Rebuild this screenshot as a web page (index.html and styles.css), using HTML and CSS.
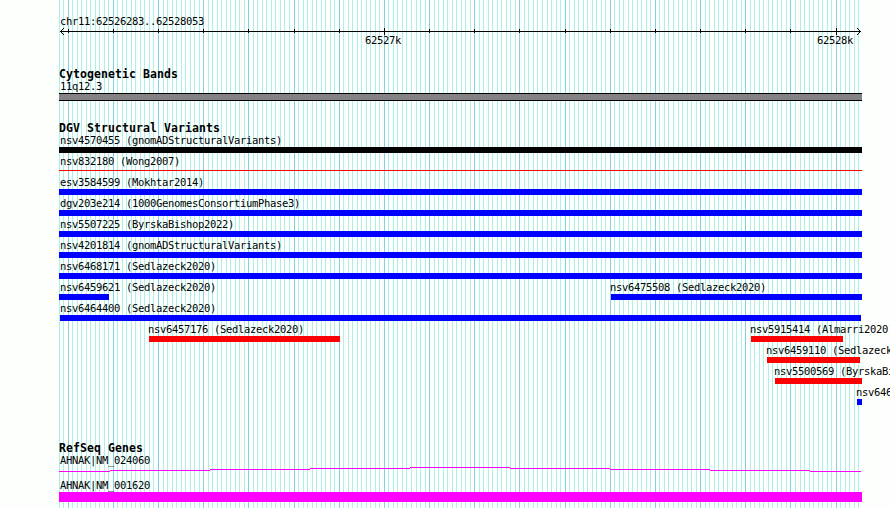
FILE: index.html
```
<!DOCTYPE html>
<html lang="en">
<head>
  <meta charset="UTF-8">
  <title>chr11:62526283..62528053</title>
  <link rel="stylesheet" href="styles.css">
</head>
<body>
  <div class="browser">
    <svg id="grid" class="grid" width="890" height="508" shape-rendering="crispEdges"></svg>

    <!-- Ruler -->
    <div class="ruler">
      <div class="label">chr11:62526283..62528053</div>
      <svg id="scale" class="scale" width="890" height="9" shape-rendering="crispEdges">
        <rect x="60" y="4" width="801" height="1"/>
        <path d="M61 3h1v3h-1zM62 2h1v1h-1zM62 6h1v1h-1zM63 1h1v1h-1zM63 7h1v1h-1z"/>
        <path d="M859 3h1v3h-1zM858 2h1v1h-1zM858 6h1v1h-1zM857 1h1v1h-1zM857 7h1v1h-1z"/>
      </svg>
      <div class="row ticks">
        <span class="label tick-a">62527k</span>
        <span class="label tick-b">62528k</span>
      </div>
    </div>

    <!-- Cytogenetic Bands -->
    <div class="track bands">
      <h2>Cytogenetic Bands</h2>
      <div class="label">11q12.3</div>
      <div class="band"></div>
    </div>

    <!-- Structural Variants -->
    <div class="track variants">
      <h2>DGV Structural Variants</h2>
      <div id="variant-rows"></div>
    </div>

    <!-- RefSeq Genes -->
    <div class="track genes">
      <h2>RefSeq Genes</h2>
      <div class="label">AHNAK|NM_024060</div>
      <svg class="intron" width="890" height="12" shape-rendering="crispEdges">
        <path fill="#ff00ff" d="M59 5h51v1H59zM110 4h100v1H110zM210 3h100v1H210zM310 2h100v1H310zM410 1h100v1H410zM510 2h100v1H510zM610 3h100v1H610zM710 4h100v1H710zM810 5h51v1H810z"/>
      </svg>
      <div class="label">AHNAK|NM_001620</div>
      <div class="exon"></div>
    </div>
  </div>

  <script>
    // each row holds one or more features: label, start px, end px, color
    const rows = [
      [["nsv4570455 (gnomADStructuralVariants)", 59, 862, "black"]],
      [["nsv832180 (Wong2007)", 59, 862, "thin"]],
      [["esv3584599 (Mokhtar2014)", 59, 862, "blue"]],
      [["dgv203e214 (1000GenomesConsortiumPhase3)", 59, 862, "blue"]],
      [["nsv5507225 (ByrskaBishop2022)", 59, 862, "blue"]],
      [["nsv4201814 (gnomADStructuralVariants)", 59, 862, "blue"]],
      [["nsv6468171 (Sedlazeck2020)", 59, 862, "blue"]],
      [["nsv6459621 (Sedlazeck2020)", 59, 109, "blue"], ["nsv6475508 (Sedlazeck2020)", 611, 862, "blue"]],
      [["nsv6464400 (Sedlazeck2020)", 60, 861, "blue"]],
      [["nsv6457176 (Sedlazeck2020)", 149, 340, "red"], ["nsv5915414 (Almarri2020)", 751, 843, "red"]],
      [["nsv6459110 (Sedlazeck2020)", 767, 860, "red"]],
      [["nsv5500569 (ByrskaBishop2022)", 775, 862, "red"]],
      [["nsv646", 857, 862, "blue"]]
    ];

    let html = '';
    rows.forEach(row => {
      let x = 0;
      html += '<div class="row">';
      row.forEach(([name, start, end, color]) => {
        const shift = Math.max(60 - start, -1);
        html += `<div class="feature" style="margin-left:${start - x}px;width:${end - start}px">
          <div class="name" style="margin-left:${shift}px">${name}</div>
          <div class="bar ${color}"></div>
        </div>`;
        x = end;
      });
      html += '</div>';
    });
    document.getElementById('variant-rows').innerHTML = html;

    // grid line every 10bp, darker every 100bp
    let lines = '';
    let ticks = '';
    for (let i = -2; i <= 175; i++) {
      const x = Math.floor(68.15 + i * 4.5176);
      const major = i % 10 === 0;
      lines += `<rect x="${x}" y="0" width="1" height="508" class="${major ? 'major' : 'minor'}"/>`;
      if (major) {
        const big = i === 70 || i === 170;
        ticks += `<rect x="${x}" y="${big ? 1 : 2}" width="1" height="${big ? 7 : 4}"/>`;
      }
    }
    document.getElementById('grid').innerHTML = lines;
    document.getElementById('scale').innerHTML += ticks;
  </script>
</body>
</html>
```
FILE: styles.css
```
body {
  margin: 0;
  background: #fdfffc;
  color: #000;
  font-family: "DejaVu Sans Mono", monospace;
}

.browser {
  position: relative;
  width: 890px;
  height: 508px;
  overflow: hidden;
}

.grid {
  position: absolute;
  top: 0;
  left: 0;
}

.minor {
  fill: #afeeea;
}

.major {
  fill: #87ceeb;
}

.ruler, .track {
  position: relative;
}

.ruler {
  padding-top: 14px;
  height: 53px;
}

.label, .name {
  font-size: 10.5px;
  line-height: 14px;
  height: 14px;
  letter-spacing: -0.32px;
  white-space: nowrap;
}

.label {
  margin-left: 60px;
}

.scale, .intron {
  display: block;
}

.scale {
  margin-top: -1px;
}

.row {
  display: flex;
}

.row.ticks {
  margin-top: -3px;
}

.tick-a {
  width: 36px;
  margin-left: 365px;
}

.tick-b {
  width: 36px;
  margin-left: 416px;
}

h2 {
  margin: 0 0 0 59px;
  font-size: 11.5px;
  line-height: 14px;
  height: 12px;
  letter-spacing: 0.08px;
  white-space: nowrap;
}

.bands {
  height: 54px;
}

.variants {
  height: 320px;
}

.band {
  box-sizing: border-box;
  width: 803px;
  height: 8px;
  margin-left: 59px;
  border-top: 1px solid #000;
  border-bottom: 1px solid #000;
  background: #848284;
}

.feature {
  flex: none;
  height: 21px;
}

.bar {
  height: 6px;
}

.black {
  background: #000;
}

.blue {
  background: #0000ff;
}

.red {
  background: #ff0000;
}

.thin {
  height: 1px;
  margin-top: 2px;
  background: #ff0000;
}

.intron {
  margin-top: -1px;
}

.exon {
  width: 803px;
  height: 10px;
  margin-left: 59px;
  background: #ff00ff;
}
```
